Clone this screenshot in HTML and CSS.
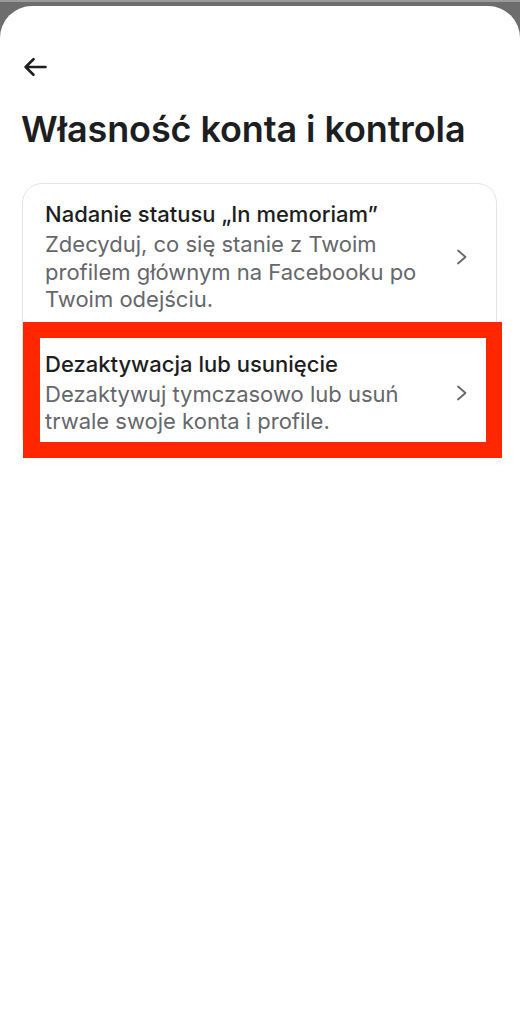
FILE: index.html
```html
<!DOCTYPE html>
<html lang="pl">
<head>
<meta charset="utf-8">
<title>Własność konta i kontrola</title>
<link rel="stylesheet" href="styles.css">
</head>
<body>
<div class="sheet">
  <div class="topbar">
    <svg class="back" width="24" height="20" viewBox="0 0 24 20" aria-hidden="true">
      <path d="M22.5 10H3 M10.5 2.2 L2.6 10 L10.5 17.8" fill="none" stroke="#1c1e21" stroke-width="2.6" stroke-linecap="round" stroke-linejoin="round"/>
    </svg>
  </div>
  <h1 class="title">Własność konta i kontrola</h1>
  <div class="card">
    <div class="item">
      <div class="item-text">
        <div class="item-title">Nadanie statusu „In memoriam”</div>
        <div class="item-sub">Zdecyduj, co się stanie z Twoim profilem głównym na Facebooku po Twoim odejściu.</div>
      </div>
      <svg class="chev" width="12" height="16" viewBox="0 0 12 16" aria-hidden="true"><path d="M2 1.5 L9.5 8 L2 14.5" fill="none" stroke="#65676b" stroke-width="1.8" stroke-linecap="round" stroke-linejoin="round"/></svg>
    </div>
    <div class="item item-2">
      <div class="item-text">
        <div class="item-title">Dezaktywacja lub usunięcie</div>
        <div class="item-sub">Dezaktywuj tymczasowo lub usuń trwale swoje konta i profile.</div>
      </div>
      <svg class="chev" width="12" height="16" viewBox="0 0 12 16" aria-hidden="true"><path d="M2 1.5 L9.5 8 L2 14.5" fill="none" stroke="#65676b" stroke-width="1.8" stroke-linecap="round" stroke-linejoin="round"/></svg>
    </div>
  </div>
  <div class="highlight"></div>
</div>
</body>
</html>
```
FILE: styles.css
```css
html, body {
  margin: 0;
  padding: 0;
}
body {
  background: #6d6d6d;
  font-family: "Inter", "Noto Sans", sans-serif;
  color: #1c1e21;
  border-top: 2px solid #9a9a9a;
}
.sheet {
  position: relative;
  margin-top: 4px;
  background: #ffffff;
  border-radius: 32px 32px 0 0;
  min-height: 1018px;
}
.topbar {
  padding: 51px 0 0 23px;
  height: 26px;
}
.back {
  display: block;
}
.title {
  margin: 24px 0 0 21px;
  font-size: 36px;
  font-weight: 600;
  line-height: 44px;
  letter-spacing: -0.1px;
  color: #1c1e21;
}
.card {
  margin: 32px 23px 0 22px;
  border: 1px solid #e2e4e8;
  border-radius: 20px;
  height: 272px;
  box-sizing: border-box;
}
.item {
  display: flex;
  align-items: center;
  padding: 16px 28px 0 22px;
}
.item-2 {
  padding-top: 36px;
}
.item-text {
  flex: 1;
}
.item-title {
  font-size: 22px;
  line-height: 28px;
  font-weight: 500;
  color: #1c1e21;
  margin-bottom: 3px;
}
.item-sub {
  font-size: 22px;
  line-height: 27.5px;
  color: #65676b;
  padding-right: 20px;
}
.chev {
  flex: none;
}
.highlight {
  position: absolute;
  left: 23px;
  top: 316px;
  width: 479px;
  height: 136px;
  box-sizing: border-box;
  border: 16px solid #ff2600;
  border-left-width: 17px;
}
```
